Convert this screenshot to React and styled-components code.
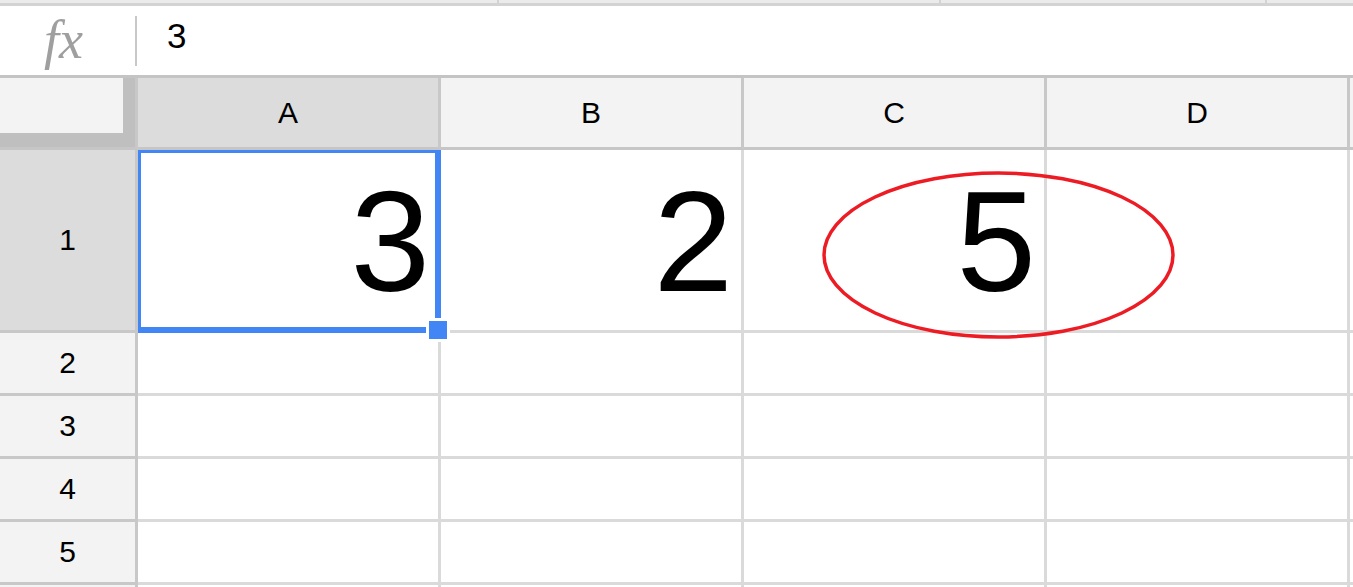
import React from 'react';
import styled, { createGlobalStyle } from 'styled-components';

const GlobalStyle = createGlobalStyle`
  html, body {
    margin: 0;
    padding: 0;
    background: #fff;
    overflow: hidden;
  }
  body {
    font-family: "Liberation Sans", Arial, sans-serif;
  }
`;

const Page = styled.div`
  width: 1353px;
  height: 587px;
  overflow: hidden;
  background: #fff;
`;

const TopStrip = styled.div`
  display: flex;
  height: 3px;
  background: #ebebeb;
  border-bottom: 3px solid #d3d3d3;
`;

const StripSegment = styled.div`
  width: ${(props) => props.$width || 'auto'};
  flex: ${(props) => (props.$width ? 'none' : '1')};
  border-right: ${(props) => (props.$last ? 'none' : '2px solid #d3d3d3')};
`;

const FormulaBar = styled.div`
  display: flex;
  align-items: center;
  height: 69px;
  border-bottom: 3px solid #c4c4c4;
`;

const FxLabel = styled.div`
  width: 135px;
  padding-left: 44px;
  padding-bottom: 1px;
  box-sizing: border-box;
  font-family: "Liberation Serif", "DejaVu Serif", serif;
  font-style: italic;
  font-size: 54px;
  line-height: 1;
  color: #9f9f9f;
  filter: blur(0.6px);
`;

const Divider = styled.div`
  width: 2px;
  height: 50px;
  background: #c8c8c8;
`;

const FormulaValue = styled.div`
  padding-left: 30px;
  padding-bottom: 10px;
  font-size: 35px;
  color: #000;
`;

const Sheet = styled.div`
  position: relative;
  display: grid;
  grid-template-columns: 138px repeat(4, 303px) 1fr;
  grid-template-rows: 72px 183px repeat(5, 63px);
`;

const Corner = styled.div`
  box-sizing: border-box;
  background: #bfbfbf;
  border-right: 3px solid #c8c8c8;
  border-bottom: 3px solid #c6c6c6;
`;

const CornerFace = styled.div`
  width: 123px;
  height: 55px;
  background: #f3f3f3;
`;

const ColHead = styled.div`
  box-sizing: border-box;
  display: flex;
  align-items: center;
  justify-content: center;
  background: ${(props) => (props.$active ? '#dcdcdc' : '#f3f3f3')};
  border-right: 3px solid #c8c8c8;
  border-bottom: 3px solid #c6c6c6;
  font-size: 30px;
  color: #000;
`;

const RowHead = styled.div`
  box-sizing: border-box;
  display: flex;
  align-items: center;
  justify-content: center;
  background: ${(props) => (props.$active ? '#dcdcdc' : '#f3f3f3')};
  border-right: 3px solid #c8c8c8;
  border-bottom: 3px solid #c8c8c8;
  font-size: 30px;
  color: #000;
`;

const Cell = styled.div`
  position: relative;
  box-sizing: border-box;
  display: flex;
  align-items: flex-end;
  justify-content: flex-end;
  padding: 0 8px 17px 0;
  border-right: 3px solid #dadada;
  border-bottom: 3px solid #dadada;
  background: #fff;
  font-size: 143px;
  line-height: 1;
  color: #000;
`;

const Selection = styled.div`
  position: absolute;
  top: 0;
  left: 0;
  right: -3px;
  bottom: -3px;
  border-style: solid;
  border-color: #4285f4;
  border-width: 3px 6px 6px 3px;
  pointer-events: none;
`;

const FillHandle = styled.div`
  position: absolute;
  right: -12px;
  bottom: -12px;
  width: 18px;
  height: 18px;
  background: #4285f4;
  border: 3px solid #fff;
  z-index: 2;
`;

const Annotation = styled.svg`
  position: absolute;
  left: 822px;
  top: 93px;
  width: 353px;
  height: 168px;
  overflow: visible;
  pointer-events: none;
`;

const COLUMNS = ['A', 'B', 'C', 'D', ''];
const ROWS = [
  { id: 1, label: '1', values: ['3', '2', '5', '', ''] },
  { id: 2, label: '2', values: ['', '', '', '', ''] },
  { id: 3, label: '3', values: ['', '', '', '', ''] },
  { id: 4, label: '4', values: ['', '', '', '', ''] },
  { id: 5, label: '5', values: ['', '', '', '', ''] },
  // only the top edge of row 6 is in view
  { id: 6, label: '', values: ['', '', '', '', ''] },
];

export default function App() {
  return (
    <Page>
      <GlobalStyle />
      <TopStrip>
        <StripSegment $width="497px" />
        <StripSegment $width="440px" />
        <StripSegment $width="324px" />
        <StripSegment $last />
      </TopStrip>
      <FormulaBar>
        <FxLabel>fx</FxLabel>
        <Divider />
        <FormulaValue>3</FormulaValue>
      </FormulaBar>
      <Sheet>
        <Corner>
          <CornerFace />
        </Corner>
        {COLUMNS.map((col, i) => (
          <ColHead key={i} $active={col === 'A'}>
            {col}
          </ColHead>
        ))}
        {ROWS.map((row) => (
          <React.Fragment key={row.id}>
            <RowHead $active={row.id === 1}>{row.label}</RowHead>
            {row.values.map((value, i) => (
              <Cell key={i}>
                {value}
                {row.id === 1 && i === 0 && (
                  <>
                    <Selection />
                    <FillHandle />
                  </>
                )}
              </Cell>
            ))}
          </React.Fragment>
        ))}
        <Annotation viewBox="0 0 353 168">
          <ellipse
            cx="176.5"
            cy="84"
            rx="174.5"
            ry="82"
            fill="none"
            stroke="#ed1c24"
            strokeWidth="3.5"
          />
        </Annotation>
      </Sheet>
    </Page>
  );
}
